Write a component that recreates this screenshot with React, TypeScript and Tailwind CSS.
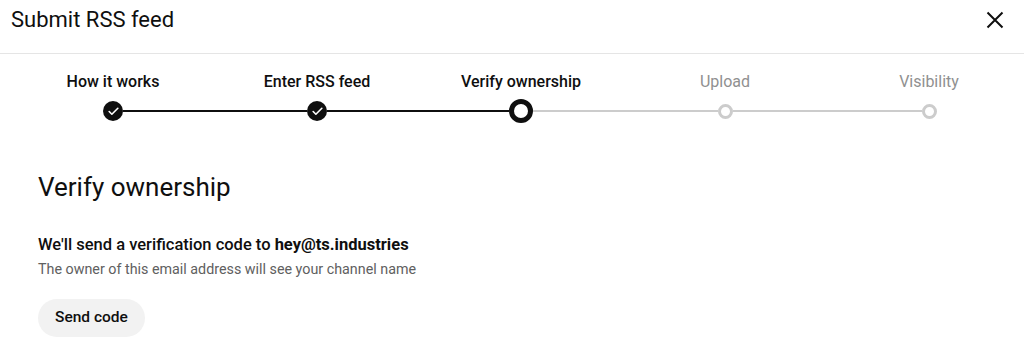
import { Check } from "lucide-react";

type StepState = "done" | "current" | "todo";

const steps: { label: string; state: StepState }[] = [
  { label: "How it works", state: "done" },
  { label: "Enter RSS feed", state: "done" },
  { label: "Verify ownership", state: "current" },
  { label: "Upload", state: "todo" },
  { label: "Visibility", state: "todo" },
];

// A step dot on the stepper line.
function Dot({ state }: { state: StepState }) {
  if (state === "done") {
    return (
      <div className="flex h-[20px] w-[20px] shrink-0 items-center justify-center rounded-full bg-[#0f0f0f]">
        <Check size={13} strokeWidth={3} color="#ffffff" />
      </div>
    );
  }
  if (state === "current") {
    return <div className="h-[24px] w-[24px] shrink-0 rounded-full border-[5px] border-[#0f0f0f] bg-white" />;
  }
  return <div className="h-[15px] w-[15px] shrink-0 rounded-full border-[3px] border-[#cccccc] bg-white" />;
}

function Stepper() {
  return (
    <div className="ml-[11px] grid w-[1020px] grid-cols-5 pt-[17px]">
      {steps.map((step, i) => {
        const leftDark = i > 0 && step.state !== "todo";
        const rightDark = i < steps.length - 1 && steps[i + 1].state !== "todo";
        return (
          <div key={step.label} className="flex flex-col items-center">
            <div
              className={
                step.state === "todo"
                  ? "text-[16px] leading-[22px] font-normal text-[#909090]"
                  : "text-[16px] leading-[22px] font-medium text-[#0f0f0f]"
              }
            >
              {step.label}
            </div>
            <div className="mt-[6px] flex h-[24px] w-full items-center">
              <div
                className={
                  i === 0
                    ? "h-[2px] flex-1"
                    : leftDark
                      ? "h-[2px] flex-1 bg-[#0f0f0f]"
                      : "h-[2px] flex-1 bg-[#cccccc]"
                }
              />
              <Dot state={step.state} />
              <div
                className={
                  i === steps.length - 1
                    ? "h-[2px] flex-1"
                    : rightDark
                      ? "h-[2px] flex-1 bg-[#0f0f0f]"
                      : "h-[2px] flex-1 bg-[#cccccc]"
                }
              />
            </div>
          </div>
        );
      })}
    </div>
  );
}

export default function App() {
  return (
    <div className="h-[353px] w-full overflow-hidden bg-white font-['Roboto',sans-serif] text-[#0f0f0f]">
      {/* Dialog header */}
      <div className="flex h-[54px] items-start justify-between border-b border-[#e5e5e5] pt-[5px]">
        <h1 className="pl-[11px] text-[22px] leading-[30px] font-normal">Submit RSS feed</h1>
        <button className="mr-[17px] mt-[3px]">
          <svg width="24" height="24" viewBox="0 0 24 24" fill="none" stroke="#0f0f0f" strokeWidth="2">
            <path d="M4.5 4.5 L19.5 19.5 M19.5 4.5 L4.5 19.5" />
          </svg>
        </button>
      </div>

      <Stepper />

      {/* Step content */}
      <div className="px-[38px] pt-[47px]">
        <h2 className="text-[26px] leading-[34px] font-normal">Verify ownership</h2>
        <p className="mt-[30px] text-[16.5px] leading-[22px] font-medium">
          We'll send a verification code to <span className="font-bold">hey@ts.industries</span>
        </p>
        <p className="mt-[3px] text-[14.3px] leading-[20px] text-[#606060]">
          The owner of this email address will see your channel name
        </p>
        <button className="mt-[20px] h-[38px] rounded-full bg-[#f2f2f2] px-[17px] text-[15.5px] font-medium">
          Send code
        </button>
      </div>
    </div>
  );
}
